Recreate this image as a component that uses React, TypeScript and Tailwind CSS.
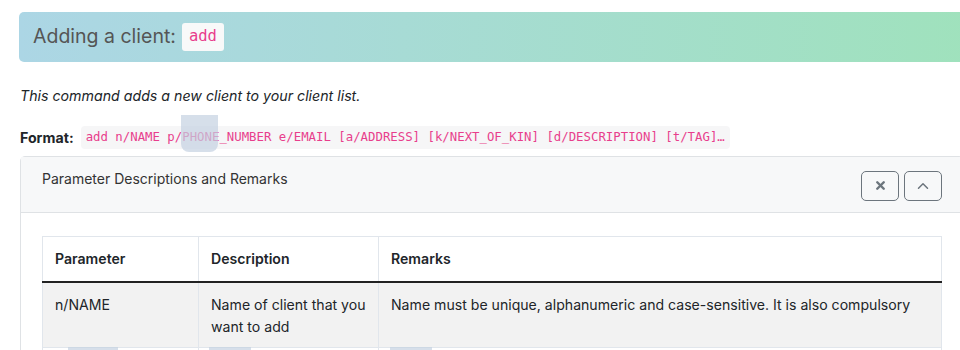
import { ChevronUp, X } from "lucide-react";

const rows = [
  {
    param: "n/NAME",
    desc: "Name of client that you want to add",
    remark: "Name must be unique, alphanumeric and case-sensitive. It is also compulsory",
  },
];

const App = () => {
  return (
    <section className="relative h-[350px] w-[960px] overflow-hidden bg-white font-['Inter',sans-serif] text-[#212529]">
      <div className="flex w-[1000px] flex-col pl-[19px] pt-[12px]">
        <div className="flex h-[50px] items-center gap-[6px] rounded-l-[5px] bg-gradient-to-r from-[#acd6e5] to-[#9fe2bb] pl-[14px]">
          <h2 className="text-[19.5px] text-[#555]">Adding a client:</h2>
          <code className="rounded-[3px] bg-[#f8f9f9] px-[7px] py-[2px] font-['DejaVu_Sans_Mono',monospace] text-[15.5px] text-[#e83e8c]">
            add
          </code>
        </div>

        <p className="mt-[23px] pl-[1px] text-[14.2px] italic">This command adds a new client to your client list.</p>

        <div className="mt-[20px] flex items-center gap-[7px] pl-[1px]">
          <span className="text-[14.2px] font-bold">Format:</span>
          <code className="rounded-[4px] bg-[#f6f6f7] px-[5px] py-[2px] font-['DejaVu_Sans_Mono',monospace] text-[12.35px] text-[#e83e8c]">
            add n/NAME p/PHONE_NUMBER e/EMAIL [a/ADDRESS] [k/NEXT_OF_KIN] [d/DESCRIPTION] [t/TAG]…
          </code>
        </div>

        <div className="ml-[1px] mt-[7px] w-[944px] rounded-[5px] border border-[#dfe2e5]">
          <div className="flex h-[56px] justify-between border-b border-[#dfe2e5] bg-[#f7f8f9] pl-[21px] pr-[21px]">
            <span className="pt-[11px] text-[14px] text-[#333]">Parameter Descriptions and Remarks</span>
            <div className="flex gap-[5px] pt-[14px]">
              <button className="flex h-[30px] w-[38px] items-center justify-center rounded-[5px] border-[1.5px] border-[#6c757d] text-[#6c757d]">
                <X size={13} strokeWidth={4.5} />
              </button>
              <button className="flex h-[30px] w-[38px] items-center justify-center rounded-[5px] border-[1.5px] border-[#6c757d] text-[#6c757d]">
                <ChevronUp size={18} strokeWidth={2} />
              </button>
            </div>
          </div>
          <div className="px-[21px] pt-[23px]">
            <table className="w-[900px] border-collapse border border-[#e1e6ec] text-left text-[14.1px] leading-[22px]">
              <thead>
                <tr className="border-b-2 border-[#222]">
                  <th className="w-[156px] border-r border-[#e1e6ec] px-[12px] py-[11px] font-semibold">Parameter</th>
                  <th className="w-[180px] border-r border-[#e1e6ec] px-[12px] py-[11px] font-semibold">Description</th>
                  <th className="px-[12px] py-[11px] font-semibold">Remarks</th>
                </tr>
              </thead>
              <tbody>
                {rows.map((r) => (
                  <tr key={r.param} className="border-b border-[#e1e6ec] bg-[#f2f2f2] align-top">
                    <td className="border-r border-[#e1e6ec] px-[12px] pb-[9px] pt-[11px]">{r.param}</td>
                    <td className="border-r border-[#e1e6ec] px-[12px] pb-[9px] pt-[11px]">{r.desc}</td>
                    <td className="px-[12px] pb-[9px] pt-[11px]">{r.remark}</td>
                  </tr>
                ))}
                <tr>
                  <td className="h-[40px] border-r border-[#e1e6ec]"></td>
                  <td className="border-r border-[#e1e6ec]"></td>
                  <td></td>
                </tr>
              </tbody>
            </table>
          </div>
        </div>
      </div>

      <div className="absolute left-[181px] top-[115px] h-[37px] w-[37px] rounded-b-[8px] bg-[#c5d1e1]/70" />
      <div className="absolute left-[68px] top-[347px] h-[10px] w-[50px] bg-[#c5d1e1]/70" />
      <div className="absolute left-[209px] top-[347px] h-[10px] w-[42px] bg-[#c5d1e1]/70" />
      <div className="absolute left-[390px] top-[347px] h-[10px] w-[42px] bg-[#c5d1e1]/70" />
    </section>
  );
};

export default App;
